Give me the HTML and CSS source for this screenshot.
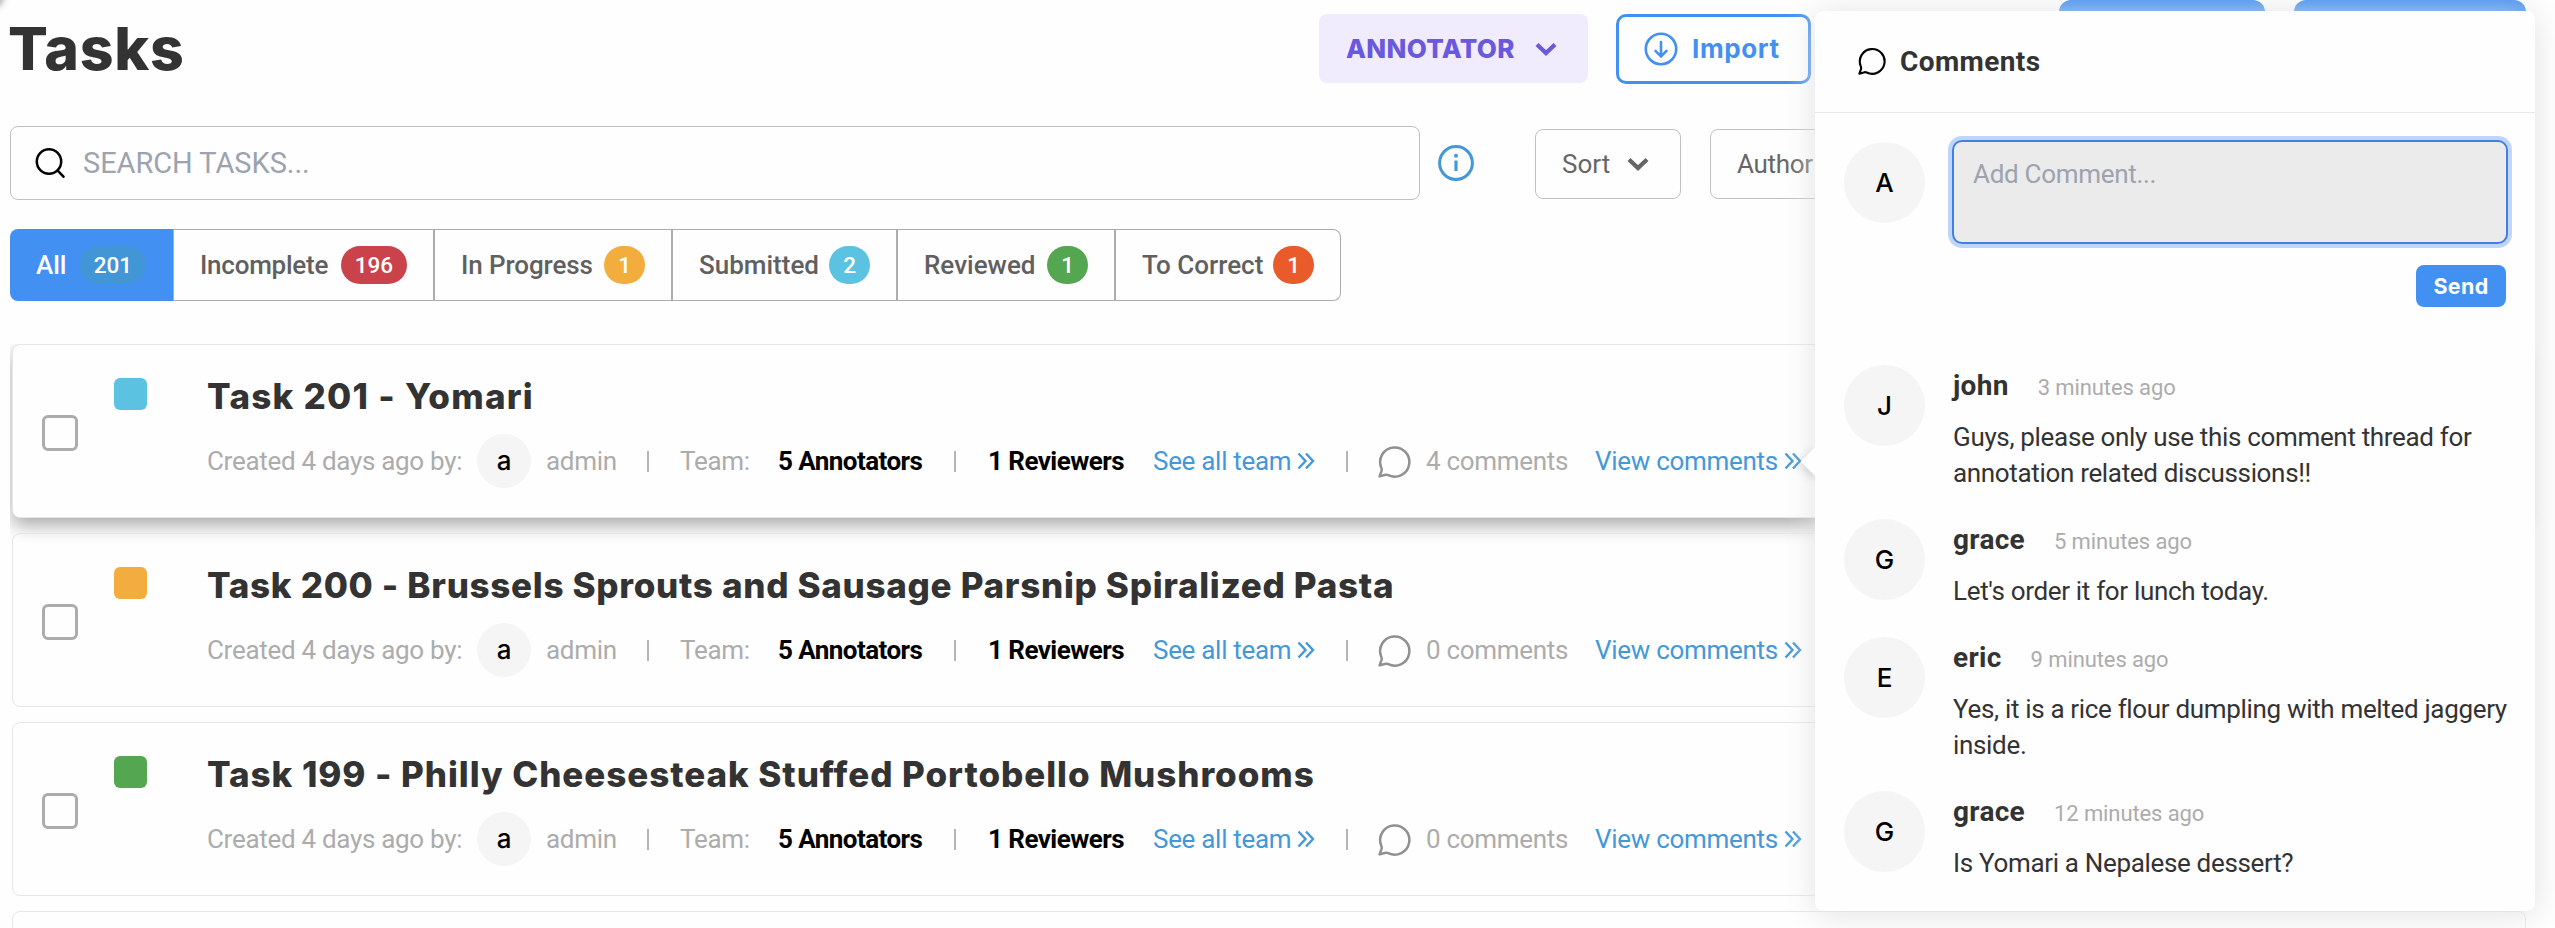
FILE: index.html
```html
<!DOCTYPE html>
<html lang="en">
<head>
<meta charset="utf-8">
<title>Tasks</title>
<link rel="stylesheet" href="styles.css">
</head>
<body>
<svg class="defs" width="0" height="0" aria-hidden="true">
  <symbol id="bubble" viewBox="0 0 33 33"><path d="M3.1 22.2A14.6 14.6 0 1 1 10.3 30.1Q8.5 29.3 6.6 30L1.6 31.4L3.4 26.4Q4.1 24.300 3.100 22.200Z" fill="none" stroke="currentColor" stroke-width="2.5" stroke-linejoin="round"/></symbol>
  <symbol id="chevron" viewBox="0 0 22 14"><path d="M2 2.500L11 11L20 2.500" fill="none" stroke="currentColor" stroke-width="4.200"/></symbol>
  <symbol id="more" viewBox="0 0 18 18"><path d="M1.500 1.500L8.500 9L1.500 16.500M9 1.500L16 9L9 16.500" fill="none" stroke="currentColor" stroke-width="2.400"/></symbol>
</svg>
<div class="app">
  <div class="corner"></div>
  <main class="page">
    <header class="head">
      <h1 class="title">Tasks</h1>
      <button class="role"><span class="role-text">ANNOTATOR</span><svg class="role-chev"><use href="#chevron"/></svg></button>
      <button class="import"><svg class="import-icon" viewBox="0 0 34 34"><g fill="none" stroke="currentColor" stroke-width="2.600" stroke-linecap="round"><circle cx="17" cy="17" r="15.200"/><path d="M17 10V24M11.500 18.800L17 24.300L22.500 18.800"/></g></svg><span class="import-text">Import</span></button>
      <button class="solid solid-a"></button>
      <button class="solid solid-b"></button>
    </header>
    <div class="tools">
      <div class="search"><svg class="search-icon" viewBox="0 0 30 30"><g fill="none" stroke="#000" stroke-width="2.500" stroke-linecap="round"><circle cx="14" cy="13.500" r="12.200"/><path d="M22.700 22.700L28.500 28.700"/></g></svg><span class="search-text">SEARCH TASKS...</span></div>
      <svg class="info" viewBox="0 0 36 36"><circle cx="18" cy="18" r="16.400" fill="none" stroke="currentColor" stroke-width="3"/><path d="M18 15.500V26" stroke="currentColor" stroke-width="3.200"/><circle cx="18" cy="10.800" r="2" fill="currentColor"/></svg>
      <button class="pick"><span class="sort-text">Sort</span><svg class="pick-chev"><use href="#chevron"/></svg></button>
      <button class="pick author"><span>Author</span></button>
    </div>
    <nav class="tabs">
      <div class="tab all"><span class="tab-text">All</span><span class="badge b-all">201</span></div>
      <div class="tab incomplete"><span class="tab-text">Incomplete</span><span class="badge b-red">196</span></div>
      <div class="tab progress"><span class="tab-text">In Progress</span><span class="badge b-amber">1</span></div>
      <div class="tab submitted"><span class="tab-text">Submitted</span><span class="badge b-cyan">2</span></div>
      <div class="tab reviewed"><span class="tab-text">Reviewed</span><span class="badge b-green">1</span></div>
      <div class="tab correct"><span class="tab-text">To Correct</span><span class="badge b-orange">1</span></div>
    </nav>
    <section class="list">
      <article class="card raised">
        <span class="check"></span><span class="swatch b-cyan"></span>
        <div class="card-body">
          <h2 class="name"><span class="n201">Task 201 - Yomari</span></h2>
          <div class="meta"><span>Created 4 days ago by:</span><span class="mini">a</span><span>admin</span><i class="bar"></i><span>Team:</span><b>5 Annotators</b><i class="bar"></i><b>1 Reviewers</b><a class="link">See all team<svg class="more"><use href="#more"/></svg></a><i class="bar"></i><svg class="bubble"><use href="#bubble"/></svg><span>4 comments</span><a class="link">View comments<svg class="more"><use href="#more"/></svg></a></div>
        </div>
      </article>
      <article class="card">
        <span class="check"></span><span class="swatch b-amber"></span>
        <div class="card-body">
          <h2 class="name"><span class="n200">Task 200 - Brussels Sprouts and Sausage Parsnip Spiralized Pasta</span></h2>
          <div class="meta"><span>Created 4 days ago by:</span><span class="mini">a</span><span>admin</span><i class="bar"></i><span>Team:</span><b>5 Annotators</b><i class="bar"></i><b>1 Reviewers</b><a class="link">See all team<svg class="more"><use href="#more"/></svg></a><i class="bar"></i><svg class="bubble"><use href="#bubble"/></svg><span>0 comments</span><a class="link">View comments<svg class="more"><use href="#more"/></svg></a></div>
        </div>
      </article>
      <article class="card">
        <span class="check"></span><span class="swatch b-green"></span>
        <div class="card-body">
          <h2 class="name"><span class="n199">Task 199 - Philly Cheesesteak Stuffed Portobello Mushrooms</span></h2>
          <div class="meta"><span>Created 4 days ago by:</span><span class="mini">a</span><span>admin</span><i class="bar"></i><span>Team:</span><b>5 Annotators</b><i class="bar"></i><b>1 Reviewers</b><a class="link">See all team<svg class="more"><use href="#more"/></svg></a><i class="bar"></i><svg class="bubble"><use href="#bubble"/></svg><span>0 comments</span><a class="link">View comments<svg class="more"><use href="#more"/></svg></a></div>
        </div>
      </article>
      <article class="card"></article>
    </section>
  </main>
  <aside class="panel">
    <div class="arrow"></div>
    <header class="panel-head"><svg class="head-bubble"><use href="#bubble"/></svg><span class="panel-title">Comments</span></header>
    <div class="compose">
      <span class="avatar">A</span>
      <div class="field">Add Comment...</div>
    </div>
    <div class="actions"><button class="send">Send</button></div>
    <div class="thread">
      <div class="comment"><span class="avatar">J</span><div class="msg"><div class="who"><b>john</b><time>3 minutes ago</time></div><p>Guys, please only use this comment thread for<br>annotation related discussions!!</p></div></div>
      <div class="comment"><span class="avatar">G</span><div class="msg"><div class="who"><b>grace</b><time>5 minutes ago</time></div><p>Let's order it for lunch today.</p></div></div>
      <div class="comment"><span class="avatar">E</span><div class="msg"><div class="who"><b>eric</b><time>9 minutes ago</time></div><p>Yes, it is a rice flour dumpling with melted jaggery<br>inside.</p></div></div>
      <div class="comment"><span class="avatar">G</span><div class="msg"><div class="who"><b>grace</b><time>12 minutes ago</time></div><p>Is Yomari a Nepalese dessert?</p></div></div>
    </div>
  </aside>
</div>
</body>
</html>
```
FILE: styles.css
```css
* { box-sizing: border-box; }
body { margin: 0; background: #fefefe; font-family: Roboto, sans-serif; font-size: 26px; }
h1, h2, p { margin: 0; }
button { font: inherit; padding: 0; background: none; border: 0; }
span, b, a, time { white-space: nowrap; }
svg { display: block; flex: none; }
.defs { position: absolute; }
.app { position: relative; width: 2555px; height: 928px; overflow: hidden; }
.corner { position: absolute; left: -30px; top: -30px; width: 32px; height: 36px; border-radius: 0 0 12px 0; background: #fff; box-shadow: 1px 2px 7px rgba(0,0,0,.4); }
.page { padding-left: 10px; }

.head { display: flex; height: 126px; align-items: flex-start; }
.title { width: 1311px; margin-left: -2px; padding-top: 13px; font: 800 59px/72px Inter, sans-serif; color: #333; letter-spacing: .7px; }
.role { display: flex; align-items: center; width: 269px; height: 69px; margin-top: 14px; padding-left: 27px; border-radius: 8px; background: #f0ecfe; color: #6a58dd; font: 800 26px/32px Inter, sans-serif; letter-spacing: .3px; }
.role-text { width: 189px; text-align: left; }
.role-chev { width: 22px; height: 14px; }
.import { display: flex; align-items: center; width: 195px; height: 70px; margin: 14px 0 0 28px; padding-left: 25px; border: 3px solid #4290f2; border-radius: 10px; color: #4290f2; font: 700 26px/32px Inter, sans-serif; letter-spacing: .6px; }
.import-icon { width: 34px; height: 34px; margin-right: 14px; }
.solid { height: 70px; background: #4290f2; border-radius: 12px; }
.solid-a { width: 206px; margin-left: 248px; }
.solid-b { width: 232px; margin-left: 29px; }

.tools { display: flex; height: 103px; align-items: flex-start; }
.search { display: flex; align-items: center; width: 1410px; height: 74px; border: 1px solid #c0c0c0; border-radius: 8px; padding-left: 24px; color: #9ca3af; font-size: 29px; letter-spacing: -.05px; }
.search-icon { width: 30px; height: 30px; margin-right: 18px; }
.info { width: 36px; height: 36px; margin: 19px 60px 0 18px; color: #4398d9; }
.pick { display: flex; align-items: center; width: 146px; height: 70px; margin: 3px 29px 0 1px; border: 1px solid #c0c0c0; border-radius: 8px; padding-left: 26px; color: #666; }
.sort-text { width: 65px; text-align: left; }
.pick-chev { width: 22px; height: 14px; }
.author { width: 190px; margin-left: 0; letter-spacing: -.3px; }

.tabs { display: flex; width: 1331px; height: 72px; }
.tab { display: flex; align-items: center; justify-content: space-between; padding: 0 26px; border: 1px solid #acacac; border-left: 0; border-right-width: 2px; color: #606060; font-weight: 500; }
.all { width: 164px; padding-right: 27px; border: 0; border-right: 1px solid #acacac; border-radius: 8px 0 0 8px; background: #4290f2; color: #fff; }
.incomplete { width: 261px; letter-spacing: -.25px; }
.progress { width: 238px; letter-spacing: -.1px; }
.submitted { width: 225px; }
.reviewed { width: 218px; }
.correct { width: 225px; border-right-width: 1px; border-radius: 0 8px 8px 0; }
.badge { height: 38px; padding: 0 14px; border-radius: 19px; color: #fff; font-size: 22.500px; line-height: 39px; letter-spacing: 0; }
.b-all { background: #4396d5; }
.b-red { background: #ca434a; }
.b-amber { background: #f3ac3e; }
.b-cyan { background: #5bc2e1; }
.b-green { background: #55a651; }
.b-orange { background: #e95b2b; }

.list { display: flex; flex-direction: column; gap: 15px; margin-top: 43px; padding: 0 29px 0 2px; height: 584px; overflow: hidden; }
.card { display: flex; flex: none; height: 174px; border: 1px solid #e6e6e6; border-radius: 8px; padding-left: 29px; }
.raised { box-shadow: 0 8px 18px rgba(0,0,0,.32); background: #fefefe; }
.check { width: 36px; height: 36px; margin-top: 70px; border: 3px solid #acacac; border-radius: 6px; }
.swatch { width: 33px; height: 32px; margin: 33px 60px 0 36px; border-radius: 6px; }
.name { margin-top: 31px; font: 800 35px/40px Inter, sans-serif; color: #333; }
.n201 { letter-spacing: 1.27px; }
.n200 { letter-spacing: .69px; }
.n199 { letter-spacing: .94px; }
.meta { display: grid; grid-template-columns: 270px 69px 101px 33px 98px 176px 34px 165px 193px 32px 48px 169px 210px; align-items: center; height: 54px; margin-top: 18px; color: #acacac; letter-spacing: -.3px; }
.meta b { font-weight: 700; color: #000; letter-spacing: -.55px; }
.mini { width: 54px; height: 54px; border-radius: 50%; background: #f5f5f5; color: #000; text-align: center; font: 500 26px/54px Inter, sans-serif; }
.bar { width: 2px; height: 21px; background: #b4b4b4; }
.link { display: flex; align-items: center; color: #4398d9; }
.more { width: 18px; height: 18px; margin-left: 6px; }
.bubble { width: 33px; height: 33px; color: #909090; }

.panel { position: absolute; left: 1815px; top: 11px; width: 720px; height: 900px; border-radius: 8px; background: #fefefe; box-shadow: 0 3px 32px #e2e2e2; }
.arrow { position: absolute; left: -10px; top: 440px; width: 21px; height: 21px; background: #fefefe; transform: rotate(45deg); box-shadow: 0 4px 9px rgba(0,0,0,.12); clip-path: polygon(-20px -20px, 41px 41px, -20px 60px); }
.panel-head { display: flex; align-items: center; height: 102px; padding: 0 0 1px 43px; border-bottom: 1px solid #e9e9e9; color: #000; }
.head-bubble { width: 28px; height: 28px; margin-right: 14px; }
.panel-title { font-weight: 700; font-size: 28px; color: #333; letter-spacing: .4px; }
.compose { display: flex; padding: 27px 27px 0 29px; }
.avatar { flex: none; width: 81px; height: 81px; margin: 2px 27px 0 0; border-radius: 50%; background: #f5f5f5; text-align: center; font: 500 26px/81px Inter, sans-serif; color: #000; }
.field { width: 556px; height: 104px; padding: 17px 19px; border: 2px solid #427fe3; border-radius: 10px; background: #ebebeb; box-shadow: 0 0 0 4px #c0d5fb; color: #9ca3af; line-height: 30px; letter-spacing: -.3px; }
.actions { display: flex; justify-content: flex-end; padding: 21px 29px 0 0; }
.send { width: 90px; height: 42px; border-radius: 8px; background: #4290f2; color: #fff; font: 700 21.500px/42px Inter, sans-serif; letter-spacing: .3px; }
.thread { padding: 56px 0 0 29px; }
.comment { display: flex; }
.msg { height: 118px; padding-left: 1px; color: #333; }
.comment:nth-child(odd) .msg { height: 154px; }
.who { display: flex; align-items: baseline; height: 47px; padding-top: 6px; }
.who b { font-size: 28px; line-height: 34px; margin-right: 29px; letter-spacing: .3px; }
.who time { font-size: 22px; color: #acacac; letter-spacing: -.1px; }
.msg p { padding-top: 9px; line-height: 36px; letter-spacing: -.33px; }
```
